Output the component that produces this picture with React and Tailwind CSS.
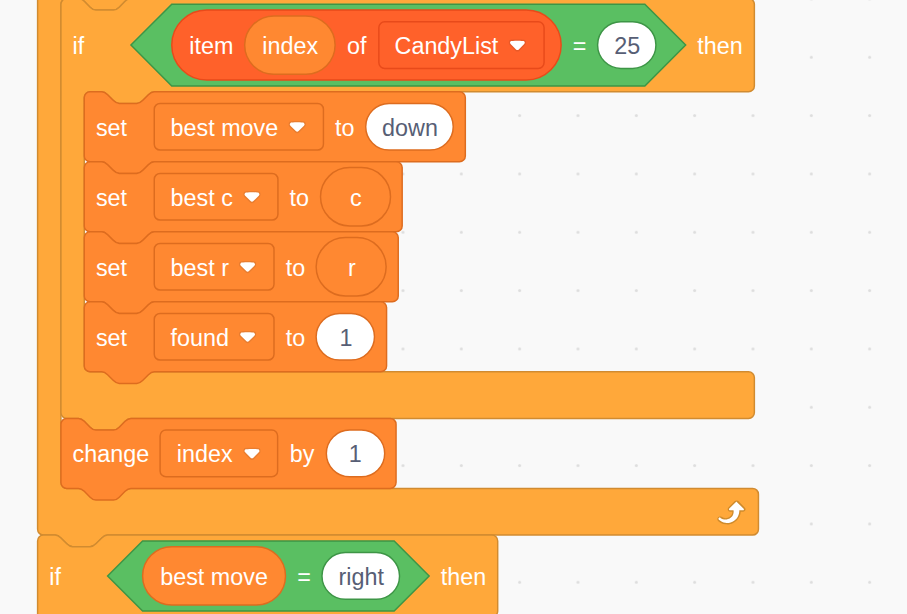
import React from "react";

const NOTCH = "c 2,0 3,1 4,2 l 4,4 c 1,1 2,2 4,2 h 12 c 2,0 3,-1 4,-2 l 4,-4 c 1,-1 2,-2 4,-2";
const BUMP = "c -2,0 -3,1 -4,2 l -4,4 c -1,1 -2,2 -4,2 h -12 c -2,0 -3,-1 -4,-2 l -4,-4 c -1,-1 -2,-2 -4,-2";

const CONTROL = "fill-[#ffa83a] stroke-[#d18b30]";
const DATA = "fill-[#ff8831] stroke-[#dd6c1f]";
const OPERATOR = "fill-[#5abf62] stroke-[#3d9546]";

function Outline({ d, tone }) {
  return (
    <svg className="absolute -z-10 size-full overflow-visible" aria-hidden="true">
      <path d={d} className={tone} strokeWidth="1" />
    </svg>
  );
}

function stackPath(w, h) {
  return `M 0,4 A 4,4 0 0,1 4,0 H 12 ${NOTCH} H ${w - 4} a 4,4 0 0,1 4,4 V ${h - 4} a 4,4 0 0,1 -4,4 H 48 ${BUMP} H 4 a 4,4 0 0,1 -4,-4 z`;
}

function mouthPath(w, head, mouth) {
  const armTop = head + mouth;
  const bottom = armTop + 32;
  return `M 0,4 A 4,4 0 0,1 4,0 H 12 ${NOTCH} H ${w - 4} a 4,4 0 0,1 4,4 V ${head - 4} a 4,4 0 0,1 -4,4 H 64 ${BUMP} h -8 a 4,4 0 0,0 -4,4 V ${armTop - 4} a 4,4 0 0,0 4,4 H ${w - 4} a 4,4 0 0,1 4,4 V ${bottom - 4} a 4,4 0 0,1 -4,4 H 48 ${BUMP} H 4 a 4,4 0 0,1 -4,-4 z`;
}

function StackBlock({ width, children }) {
  return (
    <div className="relative isolate flex h-12 items-center gap-2 px-2" style={{ width }}>
      <div className="absolute inset-0 -z-10">
        <Outline d={stackPath(width, 48)} tone={DATA} />
      </div>
      {children}
    </div>
  );
}

function MouthBlock({ width, head, mouth, header, footer, children }) {
  return (
    <div className="relative isolate flex flex-col" style={{ width }}>
      <Outline d={mouthPath(width, head, mouth)} tone={CONTROL} />
      <div className="flex shrink-0 items-center gap-2 px-2" style={{ height: head }}>
        {header}
      </div>
      <div className="flex shrink-0 flex-col pl-4" style={{ height: mouth }}>
        {children}
      </div>
      <div className="flex h-8 items-center justify-end px-2">{footer}</div>
    </div>
  );
}

function Label({ children, className = "" }) {
  return <span className={`pt-[1.9px] leading-none text-white ${className}`}>{children}</span>;
}

function Condition({ width, height, className, children }) {
  const s = height / 2;
  return (
    <div className={`relative isolate flex shrink-0 items-center gap-2 ${className}`} style={{ width, height }}>
      <div className="absolute inset-0 -z-10">
        <Outline d={`M ${s},0 H ${width - s} l ${s},${s} l ${-s},${s} H ${s} l ${-s},${-s} z`} tone={OPERATOR} />
      </div>
      {children}
    </div>
  );
}

/* Rounded shape whose edge line is centred on its boundary, as on the blocks. */
function Pill({ radius, tone, className, children }) {
  return (
    <div className={`relative isolate flex shrink-0 items-center ${className}`}>
      <svg className="absolute inset-0 -z-10 size-full overflow-visible" aria-hidden="true">
        <rect width="100%" height="100%" rx={radius} className={tone} strokeWidth="1" />
      </svg>
      {children}
    </div>
  );
}

function Variable({ className, children }) {
  return (
    <Pill radius={20} tone={DATA} className={`h-10 justify-center ${className}`}>
      <Label>{children}</Label>
    </Pill>
  );
}

function Input({ className, edge = "stroke-[#dd6c1f]", children }) {
  return (
    <Pill radius={16} tone={`fill-white ${edge}`} className={`h-8 justify-center ${className}`}>
      <span className="pt-[1.9px] leading-none text-[#575e75]">{children}</span>
    </Pill>
  );
}

function Arrow() {
  return (
    <svg viewBox="0 0 12.71 8.79" className="mt-[1.2px] h-[8.3px] w-3">
      <path
        fill="#231f20"
        opacity="0.1"
        d="M12.71,2.44A2.41,2.41,0,0,1,12,4.16L8.08,8.08a2.45,2.45,0,0,1-3.45,0L0.72,4.16A2.42,2.42,0,0,1,0,2.44,2.48,2.48,0,0,1,.71.71C1,0.47,1.43,0,6.36,0S11.75,0.46,12,.71A2.44,2.44,0,0,1,12.71,2.44Z"
      />
      <path
        fill="#fff"
        d="M6.36,7.79a1.43,1.43,0,0,1-1-.42L1.42,3.45a1.44,1.44,0,0,1,0-2c0.56-.56,9.31-0.56,9.87,0a1.44,1.44,0,0,1,0,2L7.37,7.37A1.43,1.43,0,0,1,6.36,7.79Z"
      />
    </svg>
  );
}

function Dropdown({ edge = "stroke-[#dd6c1f]", className, children }) {
  return (
    <Pill radius={4} tone={`fill-transparent ${edge}`} className={`h-8 justify-between pr-3 pl-[11.2px] ${className}`}>
      <Label>{children}</Label>
      <Arrow />
    </Pill>
  );
}

function RepeatIcon() {
  return (
    <svg viewBox="0 0 24 24" className="size-6">
      <path
        fill="#cf8b2c"
        d="M23.3,11c-0.3,0.6-0.9,1-1.5,1h-1.6c-0.1,1.3-0.5,2.5-1.1,3.6c-0.9,1.7-2.3,3.2-4.1,4.1c-1.7,0.9-3.6,1.2-5.5,0.9c-1.8-0.3-3.5-1.1-4.9-2.3c-0.7-0.7-0.7-1.9,0-2.6c0.6-0.6,1.6-0.7,2.3-0.2H7c0.9,0.6,1.9,0.9,2.9,0.9s1.9-0.3,2.7-0.9c1.1-0.8,1.8-2.1,1.8-3.5h-1.5c-0.9,0-1.7-0.7-1.7-1.7c0-0.4,0.2-0.9,0.5-1.2l4.4-4.4c0.7-0.6,1.7-0.6,2.4,0L23,9.2C23.5,9.7,23.6,10.4,23.3,11z"
      />
      <path
        fill="#fff"
        d="M21.8,11h-2.6c0,1.5-0.3,2.9-1,4.2c-0.8,1.6-2.1,2.8-3.7,3.6c-1.5,0.8-3.3,1.1-4.9,0.8c-1.6-0.2-3.2-1-4.4-2.1c-0.4-0.3-0.4-0.9-0.1-1.2c0.3-0.4,0.9-0.4,1.2-0.1l0,0c1,0.7,2.2,1.1,3.4,1.1s2.3-0.3,3.3-1c0.9-0.6,1.6-1.5,2-2.6c0.3-0.9,0.4-1.8,0.2-2.8h-2.4c-0.4,0-0.7-0.3-0.7-0.7c0-0.2,0.1-0.3,0.2-0.4l4.4-4.4c0.3-0.3,0.7-0.3,0.9,0L22,9.8c0.3,0.3,0.4,0.6,0.3,0.9S22,11,21.8,11z"
      />
    </svg>
  );
}

function SetBlock({ width, name, field, children }) {
  return (
    <StackBlock width={width}>
      <Label className="w-8 shrink-0">set</Label>
      <Dropdown className={field}>{name}</Dropdown>
      <Label>to</Label>
      {children}
    </StackBlock>
  );
}

function GridDots() {
  return (
    <svg className="absolute inset-0 size-full" aria-hidden="true">
      <defs>
        <pattern id="dots" x="23.83" y="28.1" width="58.333" height="58.333" patternUnits="userSpaceOnUse">
          <circle cx="29.17" cy="29.17" r="1.5" fill="#dddddd" />
        </pattern>
      </defs>
      <rect width="907" height="614" fill="url(#dots)" />
    </svg>
  );
}

export default function App() {
  return (
    <main className="relative flex h-[614px] w-[907px] items-start overflow-hidden bg-[#f9f9f9] pl-[38px] font-['Liberation_Sans',Arial,sans-serif]">
      <GridDots />
      <div className="-mt-[72px] flex w-[500px] shrink-0 origin-top-left translate-x-[-0.4px] translate-y-[0.42px] scale-[1.45833] flex-col text-[16px] whitespace-nowrap">
        <MouthBlock width={494.3} head={48} mouth={336} footer={<RepeatIcon />}>
          <MouthBlock
            width={475.5}
            head={64}
            mouth={192}
            header={
              <>
                <Label className="w-8 shrink-0">if</Label>
                <Condition width={380.4} height={56} className="pr-[20.6px] pl-7">
                  <Pill radius={24} tone="fill-[#ff612a] stroke-[#e84a1a]" className="h-12 w-[267px] gap-2 px-3">
                    <Label>item</Label>
                    <Variable className="w-[62px]">index</Variable>
                    <Label>of</Label>
                    <Dropdown edge="stroke-[#e84a1a]" className="w-[113.3px]">
                      CandyList
                    </Dropdown>
                  </Pill>
                  <Label>=</Label>
                  <Input edge="stroke-[#3d9546]" className="ml-auto w-10">
                    25
                  </Input>
                </Condition>
                <Label>then</Label>
              </>
            }
          >
            <SetBlock width={261.3} name="best move" field="w-[116px]">
              <Input className="w-[60px]">down</Input>
            </SetBlock>
            <SetBlock width={218} name="best c" field="w-[84.8px]">
              <Variable className="w-12">c</Variable>
            </SetBlock>
            <SetBlock width={215.3} name="best r" field="w-[82.1px]">
              <Variable className="w-12">r</Variable>
            </SetBlock>
            <SetBlock width={207.3} name="found" field="w-[82.1px]">
              <Input className="w-10">1</Input>
            </SetBlock>
          </MouthBlock>
          <StackBlock width={229.8}>
            <Label className="w-[52.3px]">change</Label>
            <Dropdown className="w-[80.6px]">index</Dropdown>
            <Label>by</Label>
            <Input className="w-10">1</Input>
          </StackBlock>
        </MouthBlock>
        <MouthBlock
          width={315.5}
          head={56}
          mouth={48}
          header={
            <>
              <Label className="w-8 shrink-0">if</Label>
              <Condition width={220.5} height={48} className="pr-5 pl-6">
                <Variable className="w-[98px]">best move</Variable>
                <Label>=</Label>
                <Input edge="stroke-[#3d9546]" className="ml-auto w-[53.2px]">
                  right
                </Input>
              </Condition>
              <Label>then</Label>
            </>
          }
        />
      </div>
    </main>
  );
}
